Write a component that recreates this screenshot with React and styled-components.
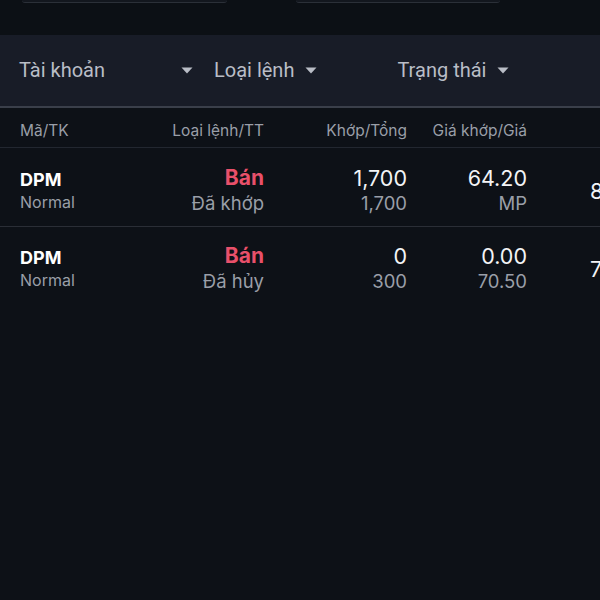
import styled, { createGlobalStyle } from 'styled-components'

const GlobalStyle = createGlobalStyle`
  *, *::before, *::after {
    box-sizing: border-box;
  }
  html, body {
    margin: 0;
    padding: 0;
    background: #0d1117;
    overflow: hidden;
  }
`

const orders = [
    { code: 'DPM', kind: 'Normal', side: 'Bán', status: 'Đã khớp', matched: '1,700', total: '1,700', price: '64.20', orderPrice: 'MP', extra: '85,000' },
    { code: 'DPM', kind: 'Normal', side: 'Bán', status: 'Đã hủy', matched: '0', total: '300', price: '0.00', orderPrice: '70.50', extra: '70,500' },
]

const Caret = () => (
    <svg width="12" height="7" viewBox="0 0 12 7">
        <path d="M0.5 0.5 L11.5 0.5 L6 6.5 Z" fill="#b9bdc6" />
    </svg>
)

const App = () => {
    return (
        <Page>
            <GlobalStyle />
            <TopArea>
                <SearchBox width="205px" />
                <SearchBox width="204px" />
            </TopArea>

            <FilterBar>
                <Filter width="174px" spread>
                    <span>Tài khoản</span>
                    <Caret />
                </Filter>
                <Filter offset="21px">
                    <span>Loại lệnh</span>
                    <Caret />
                </Filter>
                <Filter offset="80px">
                    <span>Trạng thái</span>
                    <Caret />
                </Filter>
            </FilterBar>

            <HeadRow>
                <HeadCell>Mã/TK</HeadCell>
                <HeadCell right>Loại lệnh/TT</HeadCell>
                <HeadCell right>Khớp/Tổng</HeadCell>
                <HeadCell right>Giá khớp/Giá</HeadCell>
                <HeadCell />
            </HeadRow>

            {orders.map((o, i) => (
                <OrderRow key={i} last={i === orders.length - 1}>
                    <Cell>
                        <Code>{o.code}</Code>
                        <Sub>{o.kind}</Sub>
                    </Cell>
                    <Cell right>
                        <Side>{o.side}</Side>
                        <Sub big>{o.status}</Sub>
                    </Cell>
                    <Cell right>
                        <Value>{o.matched}</Value>
                        <Sub big>{o.total}</Sub>
                    </Cell>
                    <Cell right>
                        <Value>{o.price}</Value>
                        <Sub big>{o.orderPrice}</Sub>
                    </Cell>
                    <Extra>{o.extra}</Extra>
                </OrderRow>
            ))}
        </Page>
    )
}
export default App

const Page = styled.div`
    width: 600px;
    height: 600px;
    background: #0d1117;
    overflow: hidden;
    font-family: Inter, "Noto Sans", sans-serif;
`

const TopArea = styled.div`
    height: 35px;
    display: flex;
    padding-left: 22px;
    gap: 69px;
    background: #0c1015;
`

const SearchBox = styled.div`
    width: ${p => p.width};
    height: 3px;
    border-bottom: 1px solid #2b3038;
    border-radius: 0 0 6px 6px;
    background: #13171e;
`

const FilterBar = styled.div`
    height: 73px;
    display: flex;
    align-items: center;
    padding-left: 19px;
    background: #181c27;
    border-bottom: 2px solid #3a3f4a;
`

const Filter = styled.div`
    width: ${p => p.width || 'auto'};
    margin-left: ${p => p.offset || '0'};
    display: flex;
    align-items: center;
    justify-content: ${p => (p.spread ? 'space-between' : 'flex-start')};
    gap: 11px;
    color: #b9bdc6;
    font-family: Roboto, "Noto Sans", sans-serif;
    font-size: 20px;
    span {
        padding-bottom: 2px;
    }
`

const grid = `
    display: grid;
    grid-template-columns: 130px 114px 143px 120px 100px;
    padding-left: 20px;
`

const HeadRow = styled.div`
    ${grid}
    height: 40px;
    padding-top: 5px;
    align-items: center;
    border-bottom: 1px solid #222730;
`

const HeadCell = styled.div`
    text-align: ${p => (p.right ? 'right' : 'left')};
    color: #9a9fa8;
    font-size: 15.5px;
    white-space: nowrap;
`

const OrderRow = styled.div`
    ${grid}
    height: 79px;
    padding-top: ${p => (p.last ? '4px' : '7px')};
    align-items: center;
    border-bottom: ${p => (p.last ? 'none' : '1px solid #2a2e36')};
`

const Cell = styled.div`
    display: flex;
    flex-direction: column;
    align-items: ${p => (p.right ? 'flex-end' : 'flex-start')};
    gap: 1px;
`

const Code = styled.div`
    color: #ffffff;
    font-weight: 700;
    font-size: 18px;
    line-height: 22px;
`

const Side = styled.div`
    color: #e8506a;
    font-weight: 700;
    font-size: 21px;
    line-height: 24px;
`

const Value = styled.div`
    color: #f3f4f6;
    font-size: 21.5px;
    line-height: 24px;
`

const Sub = styled.div`
    color: #9a9fa8;
    font-size: ${p => (p.big ? '18.5px' : '16px')};
    line-height: ${p => (p.big ? '24px' : '20px')};
`

const Extra = styled.div`
    padding-left: 63px;
    color: #f3f4f6;
    font-size: 21.5px;
    white-space: nowrap;
`
